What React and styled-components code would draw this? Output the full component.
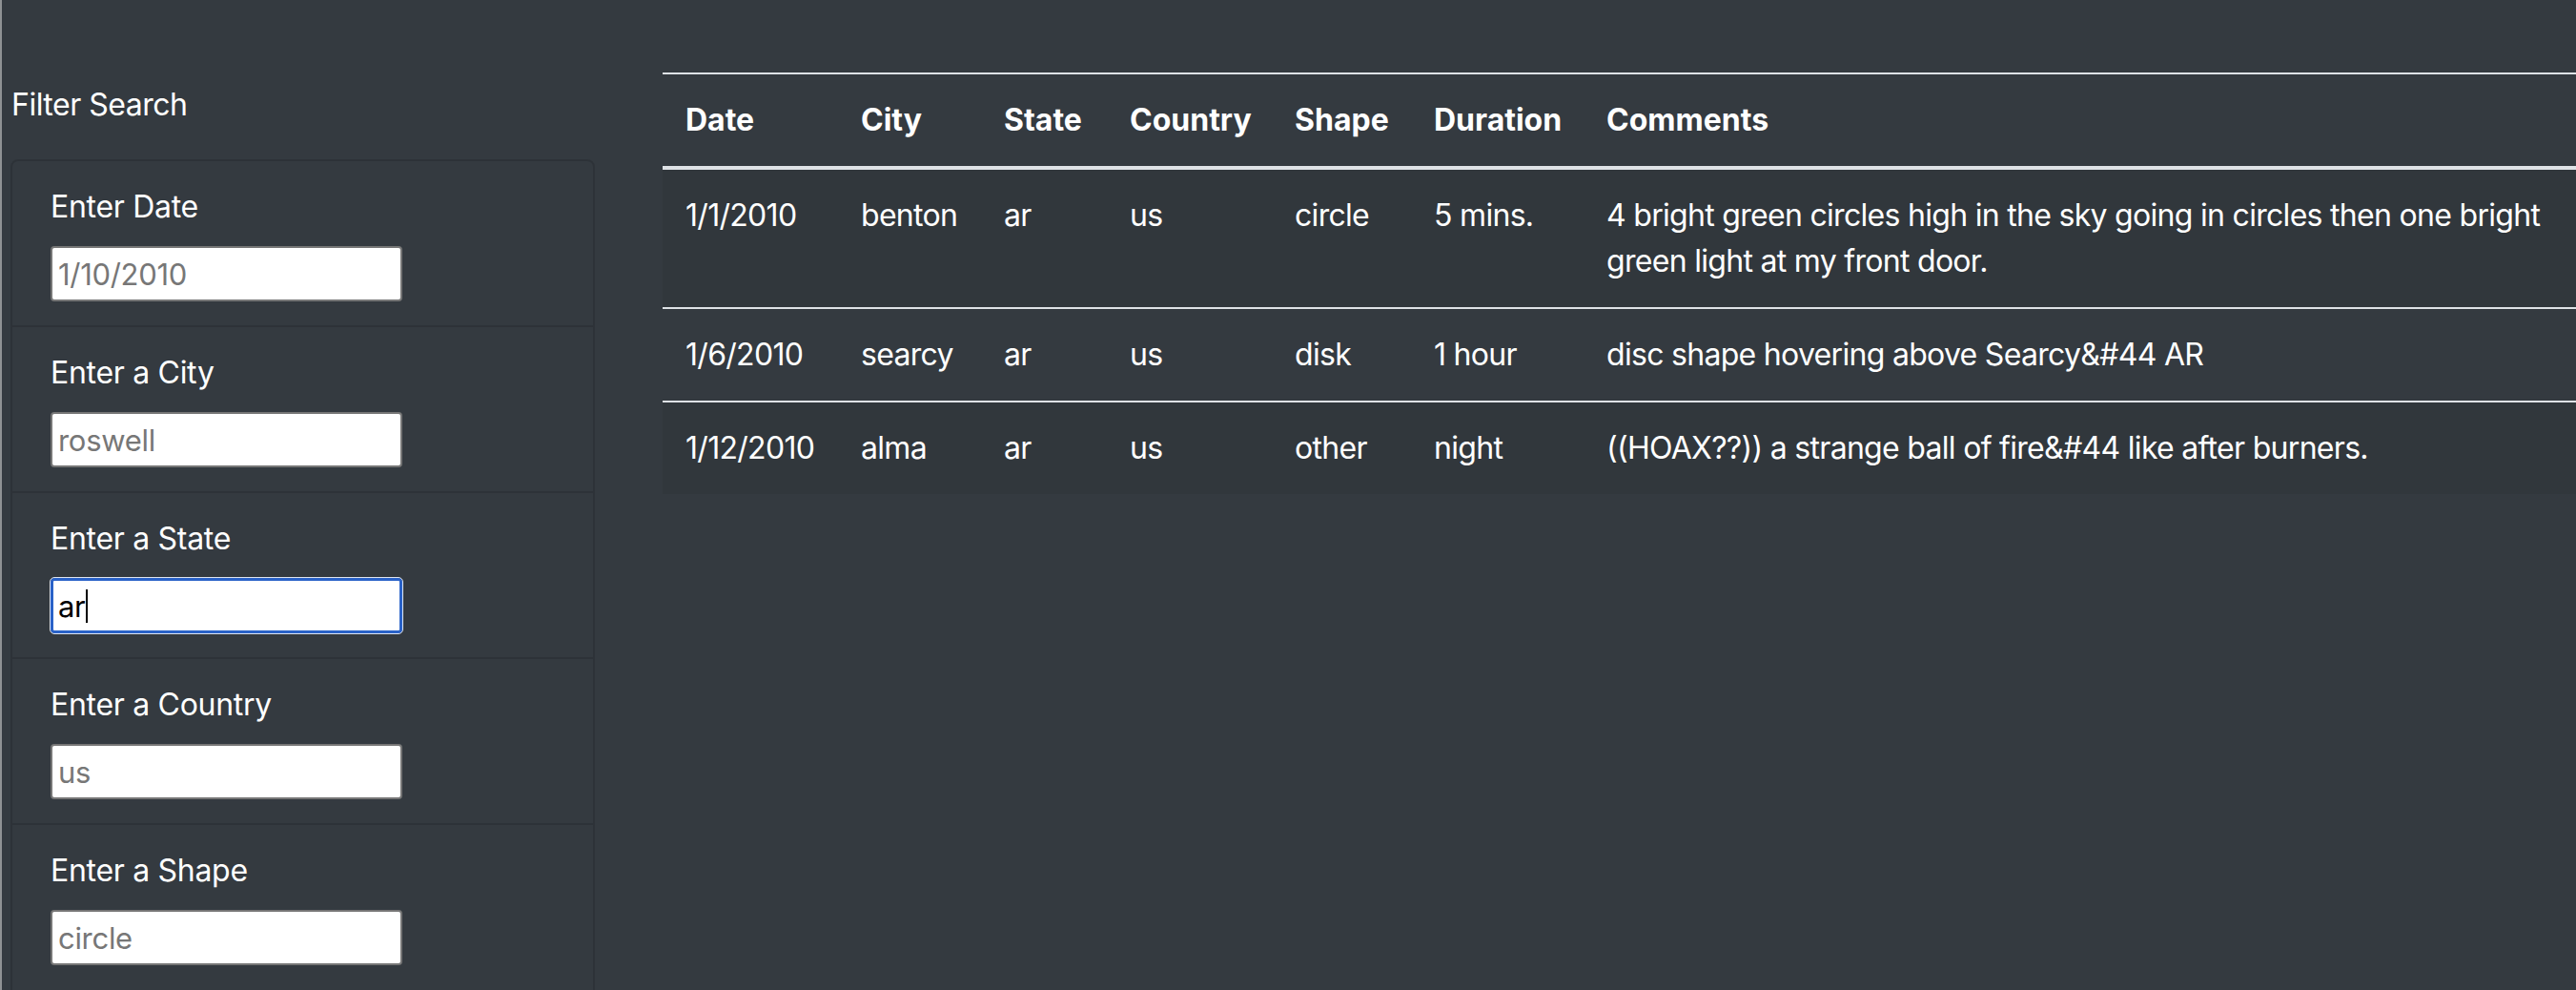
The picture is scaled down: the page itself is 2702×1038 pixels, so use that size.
import React from 'react';
import styled, { createGlobalStyle } from 'styled-components';

const GlobalStyle = createGlobalStyle`
	html, body {
		margin: 0;
		padding: 0;
		background-color: #343a40;
	}
	body {
		font-family: Inter, "Noto Sans", "Liberation Sans", sans-serif;
		color: #fff;
	}
`;

const Page = styled.div`
	display: flex;
	align-items: flex-start;
	min-height: 1038px;
	border-left: 2px solid #8e9194;
	box-sizing: border-box;
	overflow: hidden;
`;

const Sidebar = styled.aside`
	flex: 0 0 693px;
	box-sizing: border-box;
	padding: 86px 71px 0 9px;
`;

const Title = styled.div`
	font-size: 32px;
	line-height: 48px;
	letter-spacing: -0.5px;
	padding-left: 1px;
	margin-bottom: 33px;
`;

const Card = styled.div`
	border: 2px solid rgba(0, 0, 0, 0.125);
	border-radius: 8px;
	height: 880px;
	box-sizing: border-box;
`;

const Item = styled.div`
	padding: 24px 40px 25px;
	border-top: ${(p) => (p.first ? 'none' : '2px solid rgba(0, 0, 0, 0.125)')};
`;

const Label = styled.label`
	display: block;
	font-size: 32px;
	line-height: 48px;
	letter-spacing: -0.3px;
	margin-bottom: 17px;
`;

const Field = styled.span`
	position: relative;
	display: inline-block;
`;

const Input = styled.input`
	display: block;
	box-sizing: border-box;
	width: 369px;
	height: 58px;
	margin: 0;
	font-family: Inter, "Noto Sans", "Liberation Sans", sans-serif;
	font-size: 31px;
	letter-spacing: -0.3px;
	color: #000;
	background: #fff;
	border: ${(p) => (p.focused ? '3px solid #2a62c8' : '2px solid #767676')};
	border-radius: 4px;
	outline: ${(p) => (p.focused ? '1px solid #dfe6f2' : 'none')};
	padding: 0 6px 0 ${(p) => (p.focused ? '5px' : '6px')};

	&::placeholder {
		color: #777;
	}
`;

const Caret = styled.span`
	position: absolute;
	left: 37px;
	top: 12px;
	width: 2px;
	height: 35px;
	background: #000;
`;

const Main = styled.main`
	flex: 1;
	padding-top: 76px;
	min-width: 0;
`;

const Table = styled.table`
	width: 2007px;
	table-layout: fixed;
	border-collapse: collapse;
	border-top: 2px solid #dee2e6;
	font-size: 32px;
	line-height: 48px;
	color: #fff;
`;

const Th = styled.th`
	text-align: left;
	font-weight: 700;
	padding: 24px;
	vertical-align: bottom;
	border-bottom: 4px solid #dee2e6;
`;

const Row = styled.tr`
	background-color: ${(p) => (p.odd ? 'rgba(0, 0, 0, 0.05)' : 'transparent')};
`;

const Td = styled.td`
	padding: 24px;
	vertical-align: top;
	letter-spacing: -0.7px;
	border-top: 2px solid #dee2e6;
`;

const columns = [
	['Date', 184],
	['City', 150],
	['State', 132],
	['Country', 173],
	['Shape', 146],
	['Duration', 181],
	['Comments', null],
];

const filters = [
	{ label: 'Enter Date', placeholder: '1/10/2010' },
	{ label: 'Enter a City', placeholder: 'roswell' },
	{ label: 'Enter a State', value: 'ar', focused: true },
	{ label: 'Enter a Country', placeholder: 'us' },
	{ label: 'Enter a Shape', placeholder: 'circle' },
];

const sightings = [
	['1/1/2010', 'benton', 'ar', 'us', 'circle', '5 mins.', '4 bright green circles high in the sky going in circles then one bright green light at my front door.'],
	['1/6/2010', 'searcy', 'ar', 'us', 'disk', '1 hour', 'disc shape hovering above Searcy&#44 AR'],
	['1/12/2010', 'alma', 'ar', 'us', 'other', 'night', '((HOAX??)) a strange ball of fire&#44 like after burners.'],
];

export default function App() {
	return (
		<>
			<GlobalStyle />
			<Page>
				<Sidebar>
					<Title>Filter Search</Title>
					<Card>
						{filters.map((f, i) => (
							<Item key={f.label} first={i === 0}>
								<Label>{f.label}</Label>
								<Field>
									<Input
										type="text"
										placeholder={f.placeholder}
										defaultValue={f.value}
										focused={f.focused}
									/>
									{f.focused && <Caret />}
								</Field>
							</Item>
						))}
					</Card>
				</Sidebar>
				<Main>
					<Table>
						<colgroup>
							{columns.map(([name, w]) => (
								<col key={name} style={w ? { width: w } : undefined} />
							))}
						</colgroup>
						<thead>
							<tr>
								{columns.map(([name]) => (
									<Th key={name}>{name}</Th>
								))}
							</tr>
						</thead>
						<tbody>
							{sightings.map((row, i) => (
								<Row key={row[0]} odd={i % 2 === 0}>
									{row.map((cell, j) => (
										<Td key={j}>{cell}</Td>
									))}
								</Row>
							))}
						</tbody>
					</Table>
				</Main>
			</Page>
		</>
	);
}
